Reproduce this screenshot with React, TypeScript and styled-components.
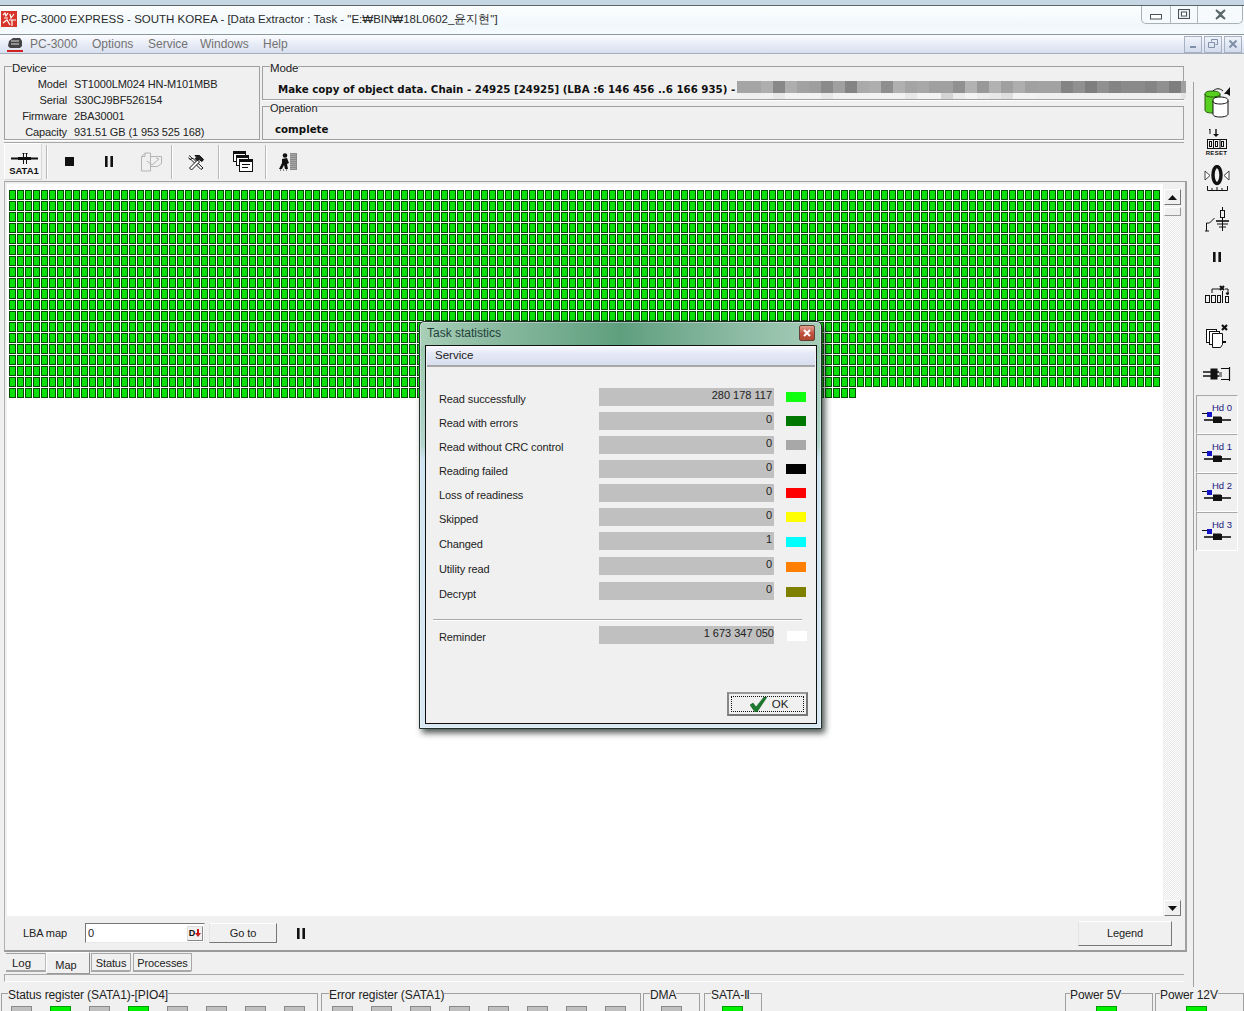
import React from "react";
import styled, { createGlobalStyle } from "styled-components";

const Global = createGlobalStyle`
  * { box-sizing: border-box; }
  html, body { margin: 0; padding: 0; background: #f0f0f0; overflow: hidden; }
  body { font-family: "Liberation Sans", Arial, sans-serif; font-size: 11px; color: #222; }
`;

const Page = styled.div`
  position: relative; width: 1244px; height: 1011px; overflow: hidden; background: #f0f0f0;
  display: flex; flex-direction: column;
  & > * { flex: none; }
`;
const ScreenStrip = styled.div`
  height: 6px; background: #c6d6e2; border-bottom: 1px solid #56666c;
`;
const TitleBar = styled.div`
  height: 29px; display: flex; align-items: flex-start; padding: 5px 1px 0 1px; position: relative;
  background: linear-gradient(#fdfefe, #f0f8fc 70%, #f6fbfd);
  border-bottom: 1px solid #8b979c;
`;
const TitleText = styled.span`
  margin-left: 4px; font-size: 11.5px; line-height: 16px; color: #2a2a2a; white-space: nowrap;
`;
const WinControls = styled.div`
  position: absolute; right: 1px; top: 0; width: 102px; height: 18px; display: flex;
  border: 1px solid #a8b2b6; border-top: 0; border-radius: 0 0 5px 5px; background: #f6fafc;
`;
const WinButton = styled.div<{ $w: number; $pt?: number }>`
  width: ${(p) => p.$w}px; display: flex; align-items: center; justify-content: center; padding-top: ${(p) => p.$pt ?? 0}px;
  border-left: 1px solid #b0b8bc; &:first-child { border-left: 0; }
`;
const MenuBar = styled.div`
  height: 19px; display: flex; align-items: center; padding: 0 2px 0 7px;
  background: linear-gradient(#fcfdff, #e6ebf6 55%, #d8e0ef);
  border-bottom: 1px solid #a3b0bb;
`;
const MenuItem = styled.span<{ $w: number }>`
  width: ${(p) => p.$w}px; color: #727272; font-size: 12px; white-space: nowrap;
`;
const MdiGroup = styled.div`
  margin-left: auto; display: flex; gap: 2px;
`;
const MdiButton = styled.div`
  width: 18px; height: 17px; display: flex; align-items: center; justify-content: center;
  background: linear-gradient(#f0f4fa, #d3dcec); border: 1px solid #a6b2c4;
`;

const Upper = styled.div`
  height: 933px; display: flex;
`;
const Main = styled.div`
  width: 1187px; padding: 6px 0 0 4px; display: flex; flex-direction: column;
  & > * { flex: none; }
`;
const InfoRow = styled.div`
  display: flex; gap: 2px; height: 80px;
`;
const Group = styled.fieldset<{ $h: number; $w?: number }>`
  margin: 0; padding: 0; min-width: 0; height: ${(p) => p.$h}px;
  ${(p) => (p.$w ? `width: ${p.$w}px;` : "")}
  border: 1px solid #a0a0a0; box-shadow: 0 1px 0 #fff;
  flex: none;
`;
const GroupLegend = styled.legend<{ $ml?: number; $size?: number }>`
  margin-left: ${(p) => p.$ml ?? 7}px; padding: 0; font-size: ${(p) => p.$size ?? 12}px; line-height: 13px; color: #222;
  white-space: nowrap; letter-spacing: -0.1px; position: relative; top: 2px;
`;
const InfoLine = styled.div`
  display: flex; height: 16px; line-height: 16px; white-space: nowrap; letter-spacing: -0.12px;
  &:first-of-type { margin-top: 3px; }
`;
const InfoKey = styled.span`
  width: 62px; text-align: right; margin-right: 7px;
`;
const RightColumn = styled.div`
  width: 922px; display: flex; flex-direction: column; gap: 0;
`;
const BoldLine = styled.div<{ $left: number; $top: number }>`
  display: flex; align-items: flex-start; padding-left: ${(p) => p.$left}px; padding-top: ${(p) => p.$top}px;
  font-family: "DejaVu Sans", sans-serif; font-weight: 700; font-size: 10.25px; line-height: 14px; color: #111;
  white-space: nowrap;
`;
const Blur = styled.div`
  display: flex; margin-left: 2px; margin-top: -1px; flex: none;
`;
const BlurBlock = styled.div<{ $a: string; $b: string; $w?: number }>`
  width: ${(p) => p.$w ?? 12}px; height: 18px;
  background: linear-gradient(#${(p) => p.$a} 12px, #${(p) => p.$b} 12px);
`;

const Toolbar = styled.div`
  height: 39px; margin-top: 2px; width: 1180px; display: flex; align-items: flex-start;
  border-top: 1px solid #a8a8a8;
`;
const SataButton = styled.div`
  width: 38px; height: 37px; display: flex; flex-direction: column; align-items: center; padding: 9px 0 0 2px;
  border: 1px solid #fff; border-right-color: #d8d8d8; border-bottom-color: #d8d8d8; background: #f4f4f4;
  font-weight: 700; font-size: 9.5px; line-height: 10px; color: #111;
`;
const SataText = styled.span`
  margin-top: 2px;
`;
const ToolSep = styled.div<{ $ml: number }>`
  width: 2px; height: 34px; margin: 2px 0 0 ${(p) => p.$ml}px; background: #b8b8b8; border-right: 1px solid #fff;
`;
const ToolIcon = styled.div<{ $ml: number; $w: number }>`
  width: ${(p) => p.$w}px; margin-left: ${(p) => p.$ml}px; height: 37px; display: flex; align-items: center; justify-content: center;
`;

const MapPanel = styled.div`
  height: 771px; display: flex; flex-direction: column; padding-top: 2px; padding-left: 2px;
  border-top: 1px solid #a0a0a0; border-left: 1px solid #b0b0b0; border-right: 2px solid #a0a0a0; border-bottom: 2px solid #9a9a9a;
`;
const MapRow = styled.div`
  height: 732px; display: flex; flex: none;
`;
const MapArea = styled.div`
  width: 1156px; background: #fff; padding: 6px 0 0 2px;
`;
const MapGrid = styled.div`
  display: grid; grid-template-columns: repeat(144, 7px); grid-auto-rows: 10px; gap: 1px;
`;
const Cell = styled.div`
  background: #0ce00c; border: 1px solid #034a03;
`;
const Scroll = styled.div`
  width: 17px; margin-left: 1px; padding-top: 5px; display: flex; flex-direction: column;
  background-image: repeating-conic-gradient(#e8e8e8 0 25%, #fff 0 50%); background-size: 2px 2px;
  background-clip: content-box;
`;
const ScrollBtn = styled.div`
  width: 17px; height: 16px; display: flex; align-items: center; justify-content: center;
  background: #f0f0f0; border: 1px solid; border-color: #fff #777 #777 #fff; flex: none;
`;
const ScrollThumb = styled.div`
  width: 17px; height: 9px; margin-top: 2px; background: #f0f0f0; border: 1px solid; border-color: #fff #999 #999 #fff; flex: none;
`;
const ScrollFill = styled.div`
  flex: 1;
`;
const Footer = styled.div`
  height: 34px; display: flex; align-items: center; padding: 0 13px 0 16px; flex: none;
`;
const FooterLabel = styled.span`
  width: 62px; white-space: nowrap; letter-spacing: -0.1px;
`;
const NumInput = styled.div`
  width: 120px; height: 20px; background: #fff; display: flex; align-items: center; justify-content: space-between;
  padding: 0 1px 0 2px; border: 1px solid; border-color: #777 #e8e8e8 #e8e8e8 #777;
`;
const SpinBtn = styled.div`
  width: 16px; height: 15px; display: flex; align-items: center; justify-content: center; gap: 0;
  font-weight: 700; font-size: 9px; background: #f0f0f0; border: 1px solid; border-color: #ddd #888 #888 #ddd; color: #111;
`;
const RaisedBtn = styled.div<{ $w: number; $h: number; $ml: number }>`
  width: ${(p) => p.$w}px; height: ${(p) => p.$h}px; margin-left: ${(p) => p.$ml}px;
  display: flex; align-items: center; justify-content: center; background: #f0f0f0; letter-spacing: -0.1px;
  border: 1px solid; border-color: #fff #777 #777 #e4e4e4;
`;
const PauseWrap = styled.div`
  margin-left: 20px; display: flex;
`;
const Spacer = styled.div`
  flex: 1;
`;
const TabsRow = styled.div`
  height: 23px; display: flex; align-items: flex-start; padding-left: 2px;
`;
const Tab = styled.div<{ $w: number; $kind: "flat" | "active" | "box"; $ml?: number }>`
  width: ${(p) => p.$w}px; margin-left: ${(p) => p.$ml ?? 0}px; white-space: nowrap; text-align: center;
  ${(p) =>
    p.$kind === "active"
      ? `height: 22px; padding: 4px 4px 0 0; line-height: 16px; border-top: 1px solid #fff; border-right: 1px solid #888; border-bottom: 1px solid #999; border-left:1px solid #fff;`
      : p.$kind === "flat"
      ? `height: 19px; margin-top: 1px; line-height: 18px; padding-right:8px; font-size: 11.5px; border-top: 1px solid #a0a0a0; border-bottom: 2px solid #a8a8a8;border-right:1px solid #bbb;`
      : `height: 19px; margin-top: 1px; line-height: 18px; border: 1px solid #a8a8a8; border-bottom-width: 2px; border-bottom-right-radius:2px; letter-spacing: -0.1px;`}
`;
const Strip = styled.div`
  height: 8px; width: 1180px; margin-top: -1px; border: 1px solid #a8a8a8; border-right: 0; border-bottom: 1px solid #fff;
`;

const Side = styled.div`
  width: 51px; margin: 28px 0 0 6px; border-left: 1px solid #a0a0a0; padding-left: 2px; display: flex; flex-direction: column;
  & > * { flex: none; }
`;
const SideIcon = styled.div<{ $h: number; $mt: number }>`
  height: ${(p) => p.$h}px; margin-top: ${(p) => p.$mt}px; width: 41px; display: flex; align-items: center; justify-content: center;
`;
const ResetLabel = styled.span`
  font-size: 6px; font-weight: 700; letter-spacing: 0.3px; line-height: 6px; color: #111;
`;
const ResetStack = styled.div`
  display: flex; flex-direction: column; align-items: center; gap: 1px;
`;
const HdButton = styled.div<{ $first?: boolean }>`
  width: 42px; height: 39px; margin-top: ${(p) => (p.$first ? 14 : 0)}px; padding: 6px 5px 0 0;
  border: 1px solid; border-color: #a8a8a8 #fff #fff #a8a8a8; display: flex; flex-direction: column; align-items: flex-end;
  font-size: 9.5px; line-height: 11px; color: #1a1a80;
`;
const HdIcon = styled.svg`
  display: block; margin-top: -2px; flex: none;
`;

const RegisterRow = styled.div`
  height: 41px; display: flex; align-items: flex-start;
`;
const RegGroup = styled.fieldset<{ $w: number; $ml: number }>`
  margin: 0 0 0 ${(p) => p.$ml}px; padding: 0; min-width: 0; height: 60px; flex: none;
  width: ${(p) => p.$w}px; border: 1px solid #a0a0a0;
`;
const LedRow = styled.div<{ $pad: number }>`
  display: flex; gap: 18px; margin-top: 6px; padding-left: ${(p) => p.$pad}px;
`;
const Led = styled.div<{ $on?: boolean }>`
  width: 21px; height: 12px; background: ${(p) => (p.$on ? "#00f000" : "#c0c0c0")}; border: 1px solid ${(p) => (p.$on ? "#00a000" : "#8a8a8a")}; border-bottom: 0;
`;

const Dialog = styled.div`
  position: absolute; left: 419px; top: 321px; width: 403px; height: 408px; padding: 23px 5px 5px 5px;
  border: 1px solid #20302a; border-radius: 5px 5px 0 0;
  background: linear-gradient(90deg, #a8cfb8 0, #8fbda4 15%, #5f9f7e 50%, #8dbba4 80%, #a6cdb8 100%) 0 0 / 100% 24px no-repeat,
    linear-gradient(#96c8a8 0, #b2d4cc 30%, #cfe4f2 34%, #d9e9f4 100%);
  box-shadow: 3px 4px 6px rgba(20, 30, 25, 0.75), 0 0 0 1px rgba(255,255,255,0.35) inset;
`;
const DialogTitle = styled.span`
  position: absolute; left: 7px; top: 4px; font-size: 12px; line-height: 14px; color: #24403a;
`;
const CloseBtn = styled.div`
  position: absolute; right: 6px; top: 3px; width: 16px; height: 16px; display: flex; align-items: center; justify-content: center;
  background: linear-gradient(#e4a090, #c0503c 55%, #b04830); border: 1px solid #604038; border-radius: 2px;
`;
const Client = styled.div`
  width: 392px; height: 379px; background: #f0f0f0; border: 1px solid #111; display: flex; flex-direction: column;
`;
const DialogMenu = styled.div`
  height: 21px; padding: 2px 0 0 8px; margin: 0 1px; line-height: 15px; font-size: 11.5px;
  background: linear-gradient(#fbfcff, #e4e9f6 40%, #d8deee); border-bottom: 2px solid #a8a8a8; flex: none;
`;
const StatList = styled.div`
  display: flex; flex-direction: column; padding: 21px 0 0 13px;
`;
const StatRow = styled.div<{ $pitch: number }>`
  height: ${(p) => p.$pitch}px; display: flex; align-items: flex-start; flex: none;
`;
const StatLabel = styled.span<{ $late?: boolean }>`
  width: 160px; line-height: ${(p) => (p.$late ? 24 : 22)}px; white-space: nowrap; color: #222; letter-spacing: -0.12px;
`;
const StatValue = styled.div<{ $pr?: number }>`
  width: 175px; height: 18px; background: #c0c0c0; text-align: right; line-height: 14px; padding-right: ${(p) => p.$pr ?? 2}px; color: #222;
`;
const Swatch = styled.div<{ $c: string; $ml?: number; $late?: boolean }>`
  width: 20px; height: 10px; margin: ${(p) => (p.$late ? 5 : 4)}px 0 0 ${(p) => p.$ml ?? 12}px; background: ${(p) => p.$c};
`;
const DialogRule = styled.div`
  height: 1px; width: 369px; margin: 2px 0 6px -6px; background: #aaa; box-shadow: 0 1px 0 #fff; flex: none;
`;
const DialogBottom = styled.div`
  margin-top: auto; display: flex; justify-content: flex-end; padding: 0 8px 7px 0;
`;
const OkButton = styled.div`
  width: 81px; height: 24px; padding: 2px; border: 2px solid #777; border-left-color: #888; border-top-color: #999; background: #f0f0f0;
  display: flex;
`;
const OkInner = styled.div`
  flex: 1; border: 1px dotted #111; display: flex; align-items: center; justify-content: center; gap: 5px; padding-left: 3px; font-size: 11.5px; color: #222;
`;

const shades: [string, string, number?][] = [
  ["a5a5a5", "f0f0f0"], ["a5a5a5", "f0f0f0"], ["aeaeae", "f0f0f0"], ["888888", "e8e8e8"], ["aeaeae", "f2f2f2"], ["a2a2a2", "f2f2f2"], ["9e9e9e", "f2f2f2"],
  ["8a8a8a", "e8e8e8"], ["a0a0a0", "f2f2f2"], ["848484", "f2f2f2"], ["aaaaaa", "f2f2f2"], ["aeaeae", "f2f2f2"], ["8e8e8e", "f2f2f2"], ["b0b0b0", "f2f2f2"],
  ["a4a4a4", "e8e8e8"], ["a8a8a8", "f4f4f4"], ["a0a0a0", "f4f4f4"], ["a0a0a0", "d4d4d4"], ["909090", "ececec"], ["b2b2b2", "f4f4f4"], ["989898", "ececec"],
  ["b2b2b2", "e8e8e8"], ["a0a0a0", "dedede"], ["aeaeae", "f2f2f2"], ["a0a0a0", "f2f2f2"], ["a2a2a2", "f0f0f0"], ["a2a2a2", "f0f0f0"], ["848484", "f0f0f0"],
  ["909090", "f0f0f0"], ["7e7e7e", "f0f0f0"], ["909090", "f0f0f0"], ["848484", "f0f0f0"], ["8a8a8a", "f0f0f0"], ["8a8a8a", "f0f0f0"], ["848484", "f0f0f0"],
  ["909090", "f0f0f0"], ["7e7e7e", "f0f0f0"], ["a0a0a0", "e4e4e4", 5],
];

const stats: { label: string; value: string; color: string; pitch: number; late?: boolean }[] = [
  { label: "Read successfully", value: "280 178 117", color: "#10ff10", pitch: 24 },
  { label: "Read with errors", value: "0", color: "#007800", pitch: 24 },
  { label: "Read without CRC control", value: "0", color: "#a8a8a8", pitch: 24 },
  { label: "Reading failed", value: "0", color: "#000", pitch: 24 },
  { label: "Loss of readiness", value: "0", color: "#ff0000", pitch: 24 },
  { label: "Skipped", value: "0", color: "#ffff00", pitch: 24 },
  { label: "Changed", value: "1", color: "#00ffff", pitch: 25, late: true },
  { label: "Utility read", value: "0", color: "#ff8000", pitch: 25, late: true },
  { label: "Decrypt", value: "0", color: "#808000", pitch: 35, late: true },
];

const cellCount = 144 * 18 + 106;
const cells = Array.from({ length: cellCount }, (_, i) => i);

const Pause = ({ h = 11, w = 8 }: { h?: number; w?: number }) => (
  <svg width={w} height={h} viewBox={`0 0 ${w} ${h}`}>
    <rect x="0" width="2.6" height={h} fill="#111" />
    <rect x={w - 2.6} width="2.6" height={h} fill="#111" />
  </svg>
);

const HdGlyph = () => (
  <HdIcon width="30" height="14" viewBox="0 0 30 14">
    <path d="M0 2.500h6" stroke="#111" strokeWidth="1" />
    <rect x="5" y="1" width="5" height="5" fill="#1414c8" />
    <path d="M2 9h27" stroke="#111" strokeWidth="1.6" />
    <rect x="11" y="6" width="9" height="6" fill="#111" />
    <path d="M12 5v1M14 5v1M16 5v1M18 5v1" stroke="#111" />
  </HdIcon>
);

export default function App() {
  return (
    <Page>
      <Global />
      <ScreenStrip />
      <TitleBar>
        <svg width="16" height="16" viewBox="0 0 16 16" style={{ flex: "none" }}>
          <rect width="16" height="16" fill="#d8342a" />
          <path d="M2 4l2-2 1 3 2-3M3 7h4M9 3l1 4 3-4M8 9h7M2 12l4-3 3 5M11 9v6" stroke="#fff" strokeWidth="1.2" fill="none" />
        </svg>
        <TitleText>PC-3000 EXPRESS - SOUTH KOREA - [Data Extractor : Task - "E:₩BIN₩18L0602_윤지현"]</TitleText>
        <WinControls>
          <WinButton $w={28} $pt={5}>
            <svg width="12" height="6"><rect x="0.5" y="0.5" width="11" height="4.5" fill="#fff" stroke="#4a5458" /></svg>
          </WinButton>
          <WinButton $w={27}>
            <svg width="13" height="11"><rect x="0.5" y="0.5" width="11" height="9" fill="#e8eef0" stroke="#4a5458" /><rect x="3.5" y="3" width="5" height="4" fill="#fff" stroke="#4a5458" /></svg>
          </WinButton>
          <WinButton $w={45}>
            <svg width="13" height="11" viewBox="0 0 13 11"><path d="M2 1l4.500 3.500L11 1M2 10l4.500-3.500L11 10M2 1l9 9M11 1L2 10" stroke="#5a686c" strokeWidth="1.800" fill="none" /></svg>
          </WinButton>
        </WinControls>
      </TitleBar>
      <MenuBar>
        <svg width="16" height="15" viewBox="0 0 16 15" style={{ marginRight: 7, flex: "none" }}>
          <path d="M2 4l4-3h7l2 3v5l-2 2H3L1 9z" fill="#444" />
          <path d="M4 4h8M4 7h8" stroke="#ddd" strokeWidth="1" />
          <rect x="0" y="13" width="16" height="2" fill="#d02020" />
        </svg>
        <MenuItem $w={62}>PC-3000</MenuItem>
        <MenuItem $w={56}>Options</MenuItem>
        <MenuItem $w={52}>Service</MenuItem>
        <MenuItem $w={63}>Windows</MenuItem>
        <MenuItem $w={40}>Help</MenuItem>
        <MdiGroup>
          <MdiButton><svg width="9" height="9"><rect x="1" y="6" width="6" height="2" fill="#8090a8" /></svg></MdiButton>
          <MdiButton><svg width="11" height="10"><path d="M3.500 2.500V.5h6v5H7.500M.5 3.500h6v5h-6z" stroke="#8090a8" fill="none" /></svg></MdiButton>
          <MdiButton><svg width="10" height="10"><path d="M1.500 1.500l7 7M8.500 1.500l-7 7" stroke="#7c8ca4" strokeWidth="1.800" /></svg></MdiButton>
        </MdiGroup>
      </MenuBar>
      <Upper>
        <Main>
          <InfoRow>
            <Group $h={80} $w={256}>
              <GroupLegend $size={11.5}>Device</GroupLegend>
              <InfoLine><InfoKey>Model</InfoKey><span>ST1000LM024 HN-M101MBB</span></InfoLine>
              <InfoLine><InfoKey>Serial</InfoKey><span>S30CJ9BF526154</span></InfoLine>
              <InfoLine><InfoKey>Firmware</InfoKey><span>2BA30001</span></InfoLine>
              <InfoLine><InfoKey>Capacity</InfoKey><span>931.51 GB (1 953 525 168)</span></InfoLine>
            </Group>
            <RightColumn>
              <Group $h={40}>
                <GroupLegend $size={11.5}>Mode</GroupLegend>
                <BoldLine $left={15} $top={9}>
                  Make copy of object data. Chain - 24925 [24925] (LBA :6 146 456 ..6 166 935) -
                  <Blur>
                    {shades.map(([a, b, w], i) => (
                      <BlurBlock key={i} $a={a} $b={b} $w={w} />
                    ))}
                  </Blur>
                </BoldLine>
              </Group>
              <Group $h={40}>
                <GroupLegend $size={11}>Operation</GroupLegend>
                <BoldLine $left={12} $top={9}>complete</BoldLine>
              </Group>
            </RightColumn>
          </InfoRow>
          <Toolbar>
            <SataButton>
              <svg width="27" height="11" viewBox="0 0 27 11">
                <path d="M0 5.500h27" stroke="#111" strokeWidth="2" />
                <rect x="7" y="4" width="13" height="3" fill="#111" />
                <path d="M12.500 0v11M15.500 0v11M11 0h6" stroke="#111" strokeWidth="1" />
              </svg>
              <SataText>SATA1</SataText>
            </SataButton>
            <ToolSep $ml={4} />
            <ToolIcon $ml={17} $w={9}>
              <svg width="9" height="9"><rect width="9" height="9" fill="#111" /></svg>
            </ToolIcon>
            <ToolIcon $ml={30} $w={9}><Pause /></ToolIcon>
            <ToolIcon $ml={27} $w={22}>
              <svg width="21" height="20" viewBox="0 0 21 20" fill="none" stroke="#b4b4b4">
                <path d="M.5 4.500L4 1h5.500v18H.5zM.5 4.500H4V1" />
                <path d="M9.500 4.500h11v7l-4 3h-7M6 9l5 4 7-6-3-1" />
              </svg>
            </ToolIcon>
            <ToolSep $ml={9} />
            <ToolIcon $ml={14} $w={17}>
              <svg width="16" height="16" viewBox="0 0 16 16" fill="#fff" stroke="#111" strokeWidth="1">
                <path d="M13 15.500L3 5.500l1-1 1 0 10 9.500zM1 1.500l2.500 2L2.500 6 .5 3.500" />
                <path d="M1.500 14l8-8 2 2-8 8z" />
                <path d="M7 1.500h4.500l4 4-1.500 2-3-2-2 1-2-2 2-1z" fill="#222" />
              </svg>
            </ToolIcon>
            <ToolSep $ml={14} />
            <ToolIcon $ml={13} $w={20}>
              <svg width="20" height="21" viewBox="0 0 20 21" fill="#fff" stroke="#111">
                <rect x="0.500" y="0.500" width="12" height="10" />
                <rect x="0.500" y="0.500" width="12" height="2" fill="#111" />
                <rect x="3.500" y="4.500" width="12" height="10" />
                <rect x="3.500" y="4.500" width="12" height="2" fill="#111" />
                <rect x="6.500" y="8.500" width="13" height="12" />
                <rect x="6.500" y="8.500" width="13" height="2" fill="#111" />
                <path d="M9 13.500h8M9 16.500h6" />
              </svg>
            </ToolIcon>
            <ToolSep $ml={12} />
            <ToolIcon $ml={12} $w={19}>
              <svg width="19" height="18" viewBox="0 0 19 18">
                <circle cx="6" cy="2.500" r="2.300" fill="#111" />
                <path d="M3 6l5-1 2 5-2 1 1 5H6l-1-4-2 4H0l3-6z" fill="#111" />
                <path d="M1 17h1M4 17h1M7 17h1" stroke="#111" />
                <rect x="11" y="0" width="7" height="17" fill="#8a8a8a" />
                <path d="M12 1v15M14 1v15M16 1v15" stroke="#c4c4c4" strokeDasharray="1 1" />
              </svg>
            </ToolIcon>
          </Toolbar>
          <MapPanel>
            <MapRow>
              <MapArea>
                <MapGrid>
                  {cells.map((i) => (
                    <Cell key={i} />
                  ))}
                </MapGrid>
              </MapArea>
              <Scroll>
                <ScrollBtn><svg width="9" height="5"><path d="M4.500 0L9 5H0z" fill="#111" /></svg></ScrollBtn>
                <ScrollThumb />
                <ScrollFill />
                <ScrollBtn><svg width="9" height="5"><path d="M4.500 5L9 0H0z" fill="#111" /></svg></ScrollBtn>
              </Scroll>
            </MapRow>
            <Footer>
              <FooterLabel>LBA map</FooterLabel>
              <NumInput>
                <span>0</span>
                <SpinBtn>
                  D
                  <svg width="6" height="8" viewBox="0 0 6 8"><path d="M2 0h2v4h2L3 8 0 4h2z" fill="#c81818" /></svg>
                </SpinBtn>
              </NumInput>
              <RaisedBtn $w={68} $h={20} $ml={4}>Go to</RaisedBtn>
              <PauseWrap><Pause /></PauseWrap>
              <Spacer />
              <RaisedBtn $w={94} $h={25} $ml={0}>Legend</RaisedBtn>
            </Footer>
          </MapPanel>
          <TabsRow>
            <Tab $w={40} $kind="flat">Log</Tab>
            <Tab $w={44} $kind="active">Map</Tab>
            <Tab $w={40} $kind="box" $ml={1}>Status</Tab>
            <Tab $w={59} $kind="box" $ml={2}>Processes</Tab>
          </TabsRow>
          <Strip />
        </Main>
        <Side>
          <SideIcon $h={36} $mt={2}>
            <svg width="28" height="32" viewBox="0 0 28 32">
              <path d="M2 8c0-2 3-3 7-3s8 1 8 3v16c0 2-4 3-8 3s-7-1-7-3z" fill="#58d020" stroke="#2a5a10" />
              <path d="M2 8c0 2 3 3 7 3s8-1 8-3" fill="none" stroke="#2a5a10" />
              <path d="M10 14c0-2 3-3 7-3s8 1 8 3v14c0 2-4 3-8 3s-7-1-7-3z" fill="#fff" stroke="#111" />
              <path d="M10 15c0 2 3 3 7 3s8-1 8-3" fill="none" stroke="#111" />
              <path d="M10 5c3-3 7-3 10 0" fill="none" stroke="#111" />
              <path d="M27 1v9l-3-2-3 0z" fill="#111" />
            </svg>
          </SideIcon>
          <SideIcon $h={30} $mt={7}>
            <ResetStack>
              <svg width="22" height="20" viewBox="0 0 22 20" fill="none" stroke="#111">
                <path d="M3 1l1-1v5" strokeWidth="1" />
                <path d="M10 0v6" strokeWidth="1.400" />
                <path d="M7 5h6l-3 3z" fill="#111" stroke="none" />
                <rect x="1.500" y="10.500" width="19" height="9" />
                <path d="M7.500 10.500v9M14 10.500v9" />
                <rect x="3.500" y="12.500" width="2" height="5" />
                <rect x="9.500" y="12.500" width="2" height="5" />
                <rect x="15.500" y="12.500" width="2" height="5" />
              </svg>
              <ResetLabel>RESET</ResetLabel>
            </ResetStack>
          </SideIcon>
          <SideIcon $h={27} $mt={8}>
            <svg width="26" height="27" viewBox="0 0 26 27" fill="none" stroke="#111">
              <path d="M1 6l5 4.500L1 15zM25 6l-5 4.500L25 15z" stroke="#444" fill="#fff" />
              <ellipse cx="13" cy="10" rx="4" ry="8.500" strokeWidth="3.400" />
              <path d="M3.500 21v4.500h20V21M8 23v2.500M13 22v3.500M18 23v2.500" />
            </svg>
          </SideIcon>
          <SideIcon $h={26} $mt={14}>
            <svg width="24" height="25" viewBox="0 0 24 25" fill="none" stroke="#111">
              <path d="M1.500 24v-8h3l5-5M0 24h4" />
              <rect x="15.500" y="3.500" width="4" height="7" />
              <path d="M17.500 0v4M17.500 10v14" />
              <path d="M11 14h13" strokeWidth="1.600" />
              <path d="M12 17h11M14 20h7" />
            </svg>
          </SideIcon>
          <SideIcon $h={12} $mt={19}><Pause h={10} w={8} /></SideIcon>
          <SideIcon $h={20} $mt={21}>
            <svg width="24" height="20" viewBox="0 0 24 20" fill="none" stroke="#111">
              <path d="M7 9V5h9M20 5h3v4" />
              <path d="M15 2l4 4M19 2l-4 4" strokeWidth="2" />
              <path d="M21 9h3l-1.500 2z" fill="#111" />
              <rect x="0.500" y="11.500" width="4" height="7" />
              <rect x="6.500" y="11.500" width="4" height="7" />
              <rect x="12.500" y="11.500" width="3" height="7" />
              <path d="M17.500 7v12" />
              <rect x="20.500" y="12.500" width="3" height="6" />
            </svg>
          </SideIcon>
          <SideIcon $h={24} $mt={20}>
            <svg width="24" height="24" viewBox="0 0 24 24" fill="#fff" stroke="#111">
              <rect x="1.500" y="5.500" width="10" height="13" />
              <rect x="4.500" y="7.500" width="10" height="13" />
              <path d="M7.500 9.500h10v11l-2 3h-8z" />
              <path d="M18 18h3" strokeWidth="2" />
              <path d="M17 1l5 5M22 1l-5 5" strokeWidth="2.200" />
            </svg>
          </SideIcon>
          <SideIcon $h={14} $mt={19}>
            <svg width="28" height="14" viewBox="0 0 28 14" fill="none" stroke="#111">
              <path d="M0 5h16M0 9h16" strokeWidth="1.600" />
              <rect x="8" y="2" width="6" height="10" fill="#111" />
              <rect x="16" y="5" width="3" height="5" fill="#8a8a8a" stroke="none" />
              <path d="M18 1.500h8M18 12.500h8M26.500 0v14" strokeWidth="1.200" />
            </svg>
          </SideIcon>
          {["Hd 0", "Hd 1", "Hd 2", "Hd 3"].map((t, i) => (
            <HdButton key={t} $first={i === 0}>
              <span>{t}</span>
              <HdGlyph />
            </HdButton>
          ))}
        </Side>
      </Upper>
      <RegisterRow>
        <RegGroup $w={317} $ml={1}>
          <GroupLegend $ml={6}>Status register (SATA1)-[PIO4]</GroupLegend>
          <LedRow $pad={9}>
            {[0, 1, 0, 1, 0, 0, 0, 0].map((v, i) => <Led key={i} $on={!!v} />)}
          </LedRow>
        </RegGroup>
        <RegGroup $w={320} $ml={3}>
          <GroupLegend>Error register (SATA1)</GroupLegend>
          <LedRow $pad={10}>
            {[0, 0, 0, 0, 0, 0, 0, 0].map((v, i) => <Led key={i} $on={!!v} />)}
          </LedRow>
        </RegGroup>
        <RegGroup $w={57} $ml={2}>
          <GroupLegend $ml={6}>DMA</GroupLegend>
          <LedRow $pad={17}><Led /></LedRow>
        </RegGroup>
        <RegGroup $w={58} $ml={4}>
          <GroupLegend $ml={6}>SATA-Ⅱ</GroupLegend>
          <LedRow $pad={17}><Led $on /></LedRow>
        </RegGroup>
        <RegGroup $w={88} $ml={303}>
          <GroupLegend $ml={4}>Power 5V</GroupLegend>
          <LedRow $pad={30}><Led $on /></LedRow>
        </RegGroup>
        <RegGroup $w={89} $ml={2}>
          <GroupLegend $ml={4}>Power 12V</GroupLegend>
          <LedRow $pad={30}><Led $on /></LedRow>
        </RegGroup>
      </RegisterRow>

      <Dialog>
        <DialogTitle>Task statistics</DialogTitle>
        <CloseBtn>
          <svg width="8" height="8"><path d="M1 1l6 6M7 1L1 7" stroke="#fff" strokeWidth="2" /></svg>
        </CloseBtn>
        <Client>
          <DialogMenu>Service</DialogMenu>
          <StatList>
            {stats.map((s) => (
              <StatRow key={s.label} $pitch={s.pitch}>
                <StatLabel $late={s.late}>{s.label}</StatLabel>
                <StatValue>{s.value}</StatValue>
                <Swatch $c={s.color} $late={s.late} />
              </StatRow>
            ))}
            <DialogRule />
            <StatRow $pitch={24}>
              <StatLabel>Reminder</StatLabel>
              <StatValue $pr={0}>1 673 347 050</StatValue>
              <Swatch $c="#fff" $ml={13} $late />
            </StatRow>
          </StatList>
          <DialogBottom>
            <OkButton>
              <OkInner>
                <svg width="17" height="15" viewBox="0 0 17 15">
                  <path d="M0 8l3-2 3 4 8-10 3 0-10 15H5z" fill="#1c7a2c" stroke="#0a4a18" strokeWidth="0.500" />
                </svg>
                <span>OK</span>
              </OkInner>
            </OkButton>
          </DialogBottom>
        </Client>
      </Dialog>
    </Page>
  );
}
